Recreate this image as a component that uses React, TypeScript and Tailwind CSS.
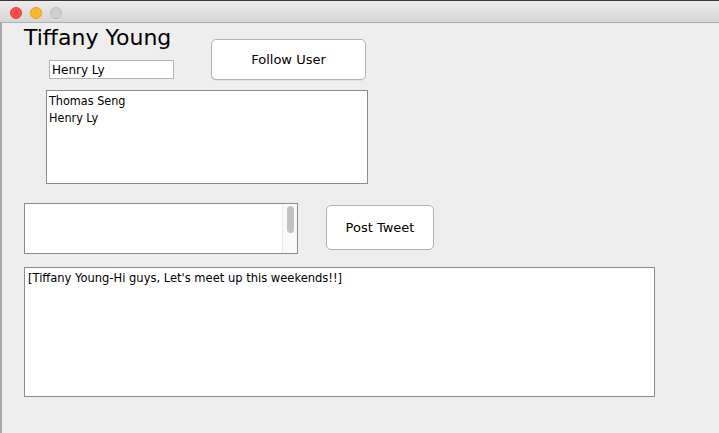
import React from 'react'

const font = { fontFamily: '"DejaVu Sans", "Liberation Sans", sans-serif' }
const condensed = { fontFamily: '"DejaVu Sans Condensed", "DejaVu Sans", sans-serif' }

function TitleBar() {
  return (
    <div className="h-[23px] shrink-0 border-t border-t-[#3a3a3a] border-b border-b-[#b1b1b1] bg-gradient-to-b from-[#ececec] to-[#d6d6d6] flex items-center gap-[8px] pl-[10px] pt-[2px]">
      <span className="w-[12px] h-[12px] rounded-full bg-[#fc4c48] border border-[#e0443e]" />
      <span className="w-[12px] h-[12px] rounded-full bg-[#fdb826] border border-[#dea123]" />
      <span className="w-[12px] h-[12px] rounded-full bg-[#d0d0d0] border border-[#bdbdbd]" />
    </div>
  )
}

export default function App() {
  return (
    <div className="w-[719px] h-[433px] bg-[#eeeeee] flex flex-col overflow-hidden text-black" style={font}>
      <TitleBar />
      <div className="flex-1 border-l-2 border-l-[#a8a8a8] pl-[22px]">
        {/* user + follow */}
        <div className="flex">
          <div className="w-[187px] flex flex-col">
            <div className="text-[22px] leading-[26px] mt-[2px]">Tiffany Young</div>
            <input
              readOnly
              value="Henry Ly"
              className="ml-[25px] mt-[9px] w-[125px] h-[19px] bg-white border border-[#b4b4b4] px-[2px] text-[12px] leading-[17px] outline-none"
            />
          </div>
          <button className="mt-[16px] w-[155px] h-[41px] bg-white border border-[#b3b3b3] rounded-[5px] text-[13px] shadow-[0_1px_0_rgba(0,0,0,0.05)]">
            Follow User
          </button>
        </div>

        <div
          className="ml-[22px] mt-[10px] w-[322px] h-[94px] bg-white border border-[#8c8c8c] pl-[2px] pt-[1px] text-[12.5px] leading-[17px]"
          style={condensed}
        >
          <div>Thomas Seng</div>
          <div>Henry Ly</div>
        </div>

        {/* tweet */}
        <div className="flex mt-[19px]">
          <div className="w-[274px] h-[51px] bg-white border border-[#8c8c8c] flex justify-end">
            <div className="w-[15px] h-full bg-[#fafafa] border-l border-l-[#e8e8e8] flex justify-center pt-[2px]">
              <div className="w-[7px] h-[27px] rounded-full bg-[#c2c2c2]" />
            </div>
          </div>
          <button className="ml-[28px] mt-[2px] w-[108px] h-[45px] bg-white border border-[#b3b3b3] rounded-[5px] text-[13px]">
            Post Tweet
          </button>
        </div>

        {/* feed */}
        <div
          className="mt-[13px] w-[631px] h-[130px] bg-white border border-[#8c8c8c] pl-[3px] pt-[1px] text-[12.8px] leading-[17px]"
          style={condensed}
        >
          [Tiffany Young-Hi guys, Let's meet up this weekends!!]
        </div>
      </div>
    </div>
  )
}
